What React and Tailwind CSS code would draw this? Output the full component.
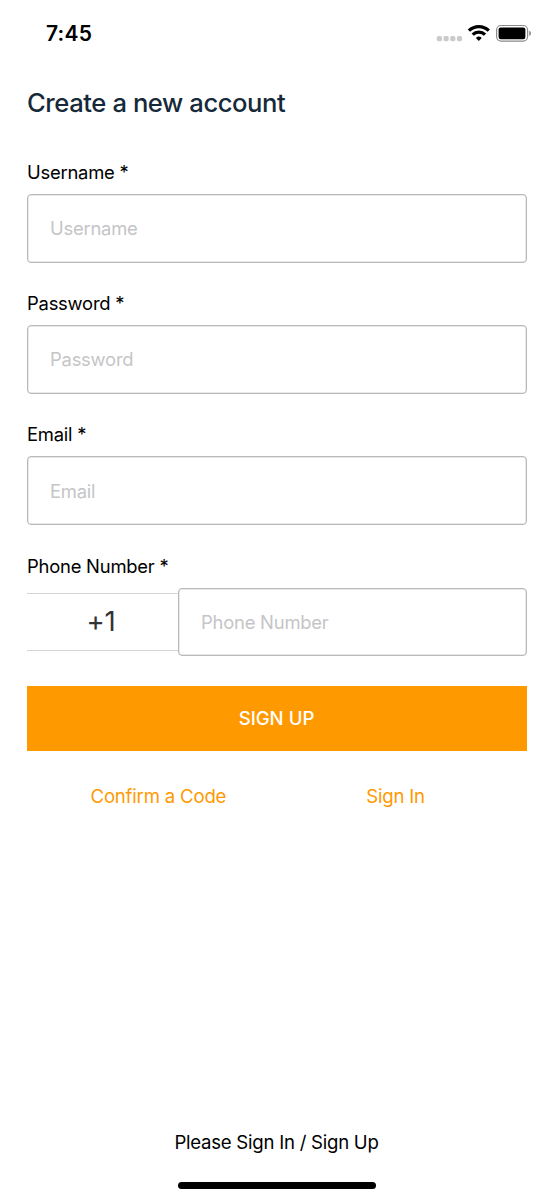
function Label({ children }) {
  return (
    <label className="mb-[11px] block whitespace-nowrap text-[18.4px] leading-[22px] tracking-[-0.22px] text-black">
      {children} *
    </label>
  );
}

function TextInput({ placeholder }) {
  return (
    <input
      placeholder={placeholder}
      aria-label={placeholder}
      className="block h-[68.5px] w-full min-w-0 flex-1 rounded-[4px] border border-[#b9b9bb] bg-white pl-[22px] text-[18.4px] tracking-[-0.22px] shadow-[inset_0_0_0_0.5px_#d4d4d6] outline-none placeholder:text-[#c5c5c7]"
    />
  );
}

function Field({ label }) {
  return (
    <div className="h-[131.2px]">
      <Label>{label}</Label>
      <TextInput placeholder={label} />
    </div>
  );
}

function StatusIcons() {
  return (
    <svg className="mr-[-5px]" width="96" height="20" viewBox="436 23 96 20" aria-hidden="true">
      <g fill="#cbcbcb">
        <rect x="436.8" y="36" width="5.2" height="5.2" rx="1.6" />
        <rect x="443.5" y="36" width="5.2" height="5.2" rx="1.6" />
        <rect x="450.2" y="36" width="5.2" height="5.2" rx="1.6" />
        <rect x="456.9" y="36" width="5.2" height="5.2" rx="1.6" />
      </g>
      <g fill="none" stroke="#000" strokeWidth="3.3">
        <path d="M468.9 30.7a14.1 14.1 0 0 1 19.9 0" />
        <path d="M472.7 34.7a8.7 8.7 0 0 1 12.3 0" />
      </g>
      <path d="M475.9 37.9a4.1 4.1 0 0 1 5.8 0l-2.9 3z" />
      <rect x="496.6" y="25.5" width="31" height="15.6" rx="4.5" fill="none" stroke="#8b8b8b" strokeWidth="1.2" />
      <rect x="498.6" y="27.4" width="26.8" height="11.8" rx="2.2" />
      <path d="M529.2 30.7c2.4 1 2.4 4.2 0 5.2z" fill="#8b8b8b" />
    </svg>
  );
}

export default function App() {
  return (
    <div className="flex h-[1200px] w-[554px] flex-col bg-white px-[27px] font-['Inter',sans-serif]">
      <header className="flex h-[66px] items-center justify-between">
        <span className="ml-[19px] mt-[2px] text-[21px] font-semibold tracking-[0.2px]">7:45</span>
        <StatusIcons />
      </header>
      <h1 className="mb-[42px] mt-[21px] text-[25.6px] font-medium leading-[32px] tracking-[-0.42px] text-[#152939]">
        Create a new account
      </h1>
      <Field label="Username" />
      <Field label="Password" />
      <Field label="Email" />
      <div>
        <Label>Phone Number</Label>
        <div className="flex items-center">
          <div className="flex h-[58px] w-[151px] items-center justify-center border-y border-[#d6d6d6] pr-[3px] text-[27.5px] tracking-[-0.3px] text-[#333]">
            +1
          </div>
          <TextInput placeholder="Phone Number" />
        </div>
      </div>
      <button className="mt-[29.5px] h-[65.3px] shrink-0 bg-[#ff9900] pr-[1px] pt-[1px] text-[18.6px] font-medium text-white">
        SIGN UP
      </button>
      <nav className="mt-[34px] flex gap-[140px] pl-[63.5px] text-[18.6px] leading-[22px] tracking-[-0.2px] text-[#ff9900]">
        <a>Confirm a Code</a>
        <a>Sign In</a>
      </nav>
      <footer className="mt-auto flex flex-col items-center pb-[11px]">
        <p className="mr-[1px] text-[18.6px] leading-[22px] tracking-[-0.25px] text-black">Please Sign In / Sign Up</p>
        <div className="mt-[29px] h-[7px] w-[198px] rounded-full bg-black" />
      </footer>
    </div>
  );
}
